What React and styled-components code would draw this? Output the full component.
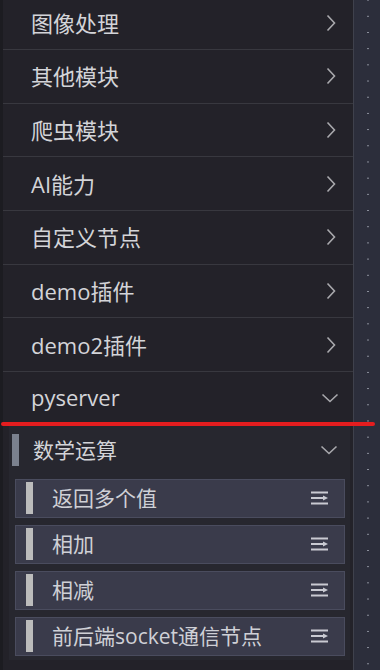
import styled, { createGlobalStyle } from "styled-components";

const GlobalStyle = createGlobalStyle`
  html, body {
    margin: 0;
    padding: 0;
    background: #1c1c21;
    overflow: hidden;
  }
  #root {
    height: 670px;
  }
`;

const Page = styled.div`
  position: relative;
  display: flex;
  height: 670px;
  font-family: "Open Sans", "Noto Sans CJK SC", sans-serif;
`;

const Sidebar = styled.div`
  width: 350px;
  margin-left: 3px;
  background: #232229;
  overflow: hidden;
`;

const Scroller = styled.div`
  margin-top: -3.7px;
`;

const CategoryRow = styled.div`
  display: flex;
  align-items: center;
  justify-content: space-between;
  height: 52.67px;
  padding: 0 ${(p) => (p.$open ? "14px" : "17px")} 0 28px;
  border-bottom: 1px solid ${(p) => (p.$open ? "transparent" : "#38383f")};
  color: #d3d4d8;
  font-size: 22px;
  box-sizing: content-box;
`;

const Label = styled.span`
  margin-top: -2px;
`;

const Section = styled.div`
  margin: 0 3px 0 6px;
  padding-bottom: 4px;
  background: #27272f;
`;

const SectionHeader = styled.div`
  display: flex;
  align-items: center;
  height: 48px;
  padding: 0 12px 0 3px;
  color: #d3d4d8;
  font-size: 21px;
`;

const HeaderBar = styled.span`
  width: 7px;
  height: 32px;
  background: #7b818e;
  margin-right: 14px;
`;

const Grow = styled.span`
  flex: 1;
  margin-top: -2px;
`;

const ItemList = styled.div`
  display: flex;
  flex-direction: column;
  gap: 7px;
  padding: 5px 5px 0 6px;
`;

const Item = styled.div`
  display: flex;
  align-items: center;
  height: 37px;
  padding: 0 15px 0 10px;
  background: #3a3b4b;
  border: 1px solid #4a4c5e;
  color: #cfd0d6;
  font-size: 21px;
`;

const ItemBar = styled.span`
  width: 7px;
  height: 32px;
  background: #bcbcbc;
  margin-right: 19px;
`;

const Canvas = styled.div`
  flex: 1;
  border-left: 1px solid #3f414c;
  background-color: #2c2e3b;
  background-image: radial-gradient(circle, #8e929e 0.8px, transparent 1px);
  background-size: 16px 16.2px;
  background-position: 6px -8px;
`;

const RedLine = styled.div`
  position: absolute;
  left: 1px;
  top: 422px;
  width: 374px;
  height: 4px;
  border-radius: 2px;
  background: #e41d1f;
`;

const ChevronRight = () => (
  <svg width="10" height="18" viewBox="0 0 10 18">
    <polyline points="1.5,1.5 8.5,9 1.5,16.5" fill="none" stroke="#a9a9ad" strokeWidth="1.6" />
  </svg>
);

const ChevronDown = () => (
  <svg width="18" height="10" viewBox="0 0 18 10">
    <polyline points="1.5,1.5 9,8.5 16.5,1.5" fill="none" stroke="#a9a9ad" strokeWidth="1.6" />
  </svg>
);

const MenuIcon = () => (
  <svg width="18" height="14" viewBox="0 0 18 14">
    <rect x="0" y="0.5" width="17" height="2" fill="#c9cad2" />
    <rect x="0" y="6" width="12" height="2" fill="#c9cad2" />
    <polygon points="12,4.5 17,7 12,9.5" fill="#c9cad2" />
    <rect x="0" y="11.5" width="17" height="2" fill="#c9cad2" />
  </svg>
);

const categories = ["图像处理", "其他模块", "爬虫模块", "AI能力", "自定义节点", "demo插件", "demo2插件"];
const items = ["返回多个值", "相加", "相减", "前后端socket通信节点"];

export default function App() {
  return (
    <>
      <GlobalStyle />
      <Page>
        <Sidebar>
          <Scroller>
            {categories.map((c) => (
              <CategoryRow key={c}>
                <Label>{c}</Label>
                <ChevronRight />
              </CategoryRow>
            ))}
            <CategoryRow $open>
              <Label>pyserver</Label>
              <ChevronDown />
            </CategoryRow>
            <Section>
              <SectionHeader>
                <HeaderBar />
                <Grow>数学运算</Grow>
                <ChevronDown />
              </SectionHeader>
              <ItemList>
                {items.map((it) => (
                  <Item key={it}>
                    <ItemBar />
                    <Grow>{it}</Grow>
                    <MenuIcon />
                  </Item>
                ))}
              </ItemList>
            </Section>
          </Scroller>
        </Sidebar>
        <Canvas />
        <RedLine />
      </Page>
    </>
  );
}
